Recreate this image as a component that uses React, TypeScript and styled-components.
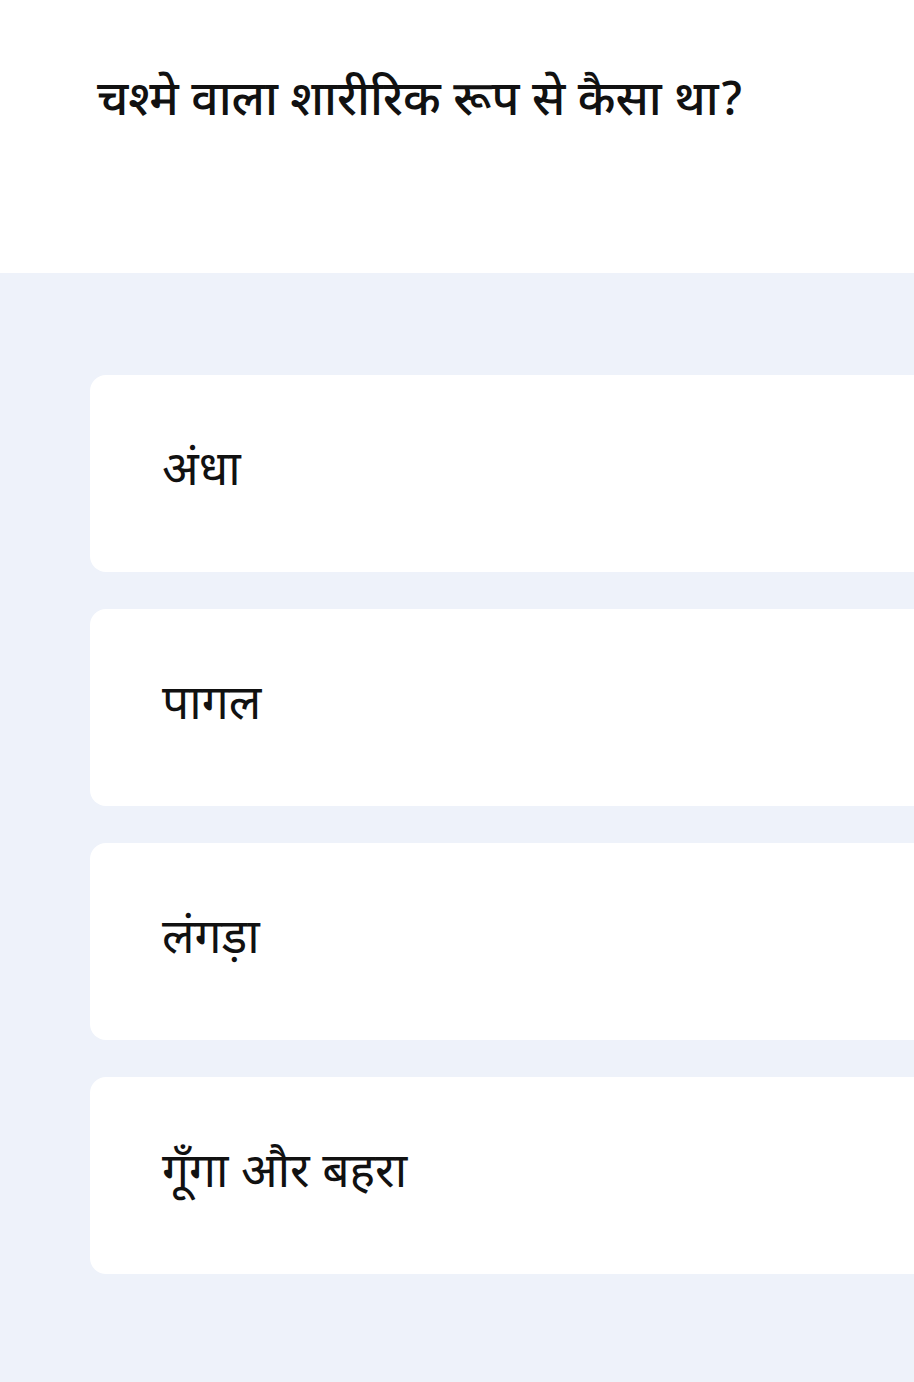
import React from "react";
import styled, { createGlobalStyle } from "styled-components";

const Global = createGlobalStyle`
  html, body { margin: 0; padding: 0; }
  body { background: #eef2fa; font-family: "Noto Sans Devanagari", "Noto Sans", sans-serif; }
`;

const Page = styled.div`
  width: 914px;
  min-height: 1382px;
  background: #eef2fa;
  overflow: hidden;
`;

const Header = styled.header`
  height: 273px;
  background: #ffffff;
  box-sizing: border-box;
  padding: 70px 0 0 97px;
`;

const Question = styled.h1`
  margin: 0;
  font-size: 48px;
  font-weight: 500;
  color: #111111;
  line-height: 1.4;
`;

const Options = styled.div`
  display: flex;
  flex-direction: column;
  gap: 37px;
  padding: 102px 0 0 90px;
`;

const Option = styled.div`
  height: 197px;
  width: 900px;
  background: #ffffff;
  border-radius: 16px;
  display: flex;
  align-items: center;
  padding-left: 72px;
  box-sizing: border-box;
  font-size: 48px;
  font-weight: 400;
  color: #111111;
`;

const options = ["अंधा", "पागल", "लंगड़ा", "गूँगा और बहरा"];

export default function App() {
  return (
    <Page>
      <Global />
      <Header>
        <Question>चश्मे वाला शारीरिक रूप से कैसा था?</Question>
      </Header>
      <Options>
        {options.map((o) => (
          <Option key={o}>{o}</Option>
        ))}
      </Options>
    </Page>
  );
}
